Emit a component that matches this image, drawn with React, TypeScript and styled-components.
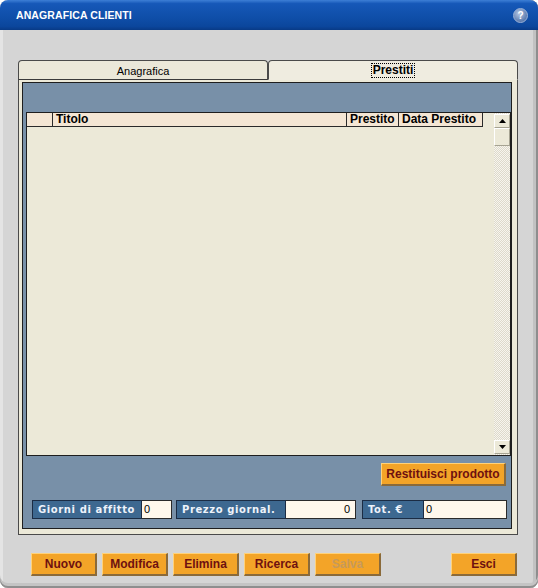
import React from 'react'
import styled, { createGlobalStyle } from 'styled-components'

const GlobalStyle = createGlobalStyle`
    html, body {
        margin: 0;
        padding: 0;
        background: #ffffff;
    }
    body {
        font-family: "Liberation Sans", Arial, sans-serif;
    }
`;

const Window = styled.div`
    width: 538px;
    height: 588px;
    box-sizing: border-box;
    display: flex;
    flex-direction: column;
    background: #d5d5d5;
    border-radius: 8px 8px 8px 8px;
    overflow: hidden;
    box-shadow: inset 0 -2px 0 #8e8e8e, inset 0 -5px 0 #c4c4c4, inset -2px 0 0 #8e8e8e, inset -5px 0 0 #c2c2c2, inset 3px 0 0 #e4e4e4;
`;

const TitleBar = styled.div`
    height: 30px;
    flex: none;
    display: flex;
    align-items: center;
    justify-content: space-between;
    padding: 0 10px 0 16px;
    background: linear-gradient(#3d7fd6 0%, #1658b8 12%, #0f4ea8 60%, #0b469c 88%, #083a86 100%);
`;

const TitleText = styled.span`
    color: #ffffff;
    font-weight: 700;
    font-size: 10.5px;
    letter-spacing: 0.1px;
`;

const HelpIcon = styled.span`
    width: 13px;
    height: 13px;
    border-radius: 50%;
    display: flex;
    align-items: center;
    justify-content: center;
    background: radial-gradient(circle at 40% 35%, #b6c8e4, #5676aa 75%);
    border: 1px solid #9db3d8;
    color: #ffffff;
    font-size: 10px;
    font-weight: 700;
`;

const Body = styled.div`
    flex: 1;
    display: flex;
    flex-direction: column;
    padding: 30px 20px 0 18px;
`;

const TabStrip = styled.div`
    display: flex;
    height: 20px;
`;

type TabProps = {
    $active?: boolean;
}
const Tab = styled.div<TabProps>`
    flex: 1;
    box-sizing: border-box;
    display: flex;
    align-items: center;
    justify-content: center;
    background: ${props => props.$active ? '#efece0' : '#ebe8d9'};
    border: 1px solid #4a4a4a;
    border-bottom: ${props => props.$active ? '1px solid #efece0' : '1px solid #3a3a3a'};
    border-radius: 4px 4px 0 0;
    color: #000000;
    font-size: ${props => props.$active ? '12px' : '11px'};
    font-weight: ${props => props.$active ? 700 : 400};
    padding-top: 1px;
`;

const FocusLabel = styled.span`
    outline: 1px dotted #000;
    padding: 0 1px;
    line-height: 13px;
`;

const TabPage = styled.div`
    box-sizing: border-box;
    height: 455px;
    display: flex;
    flex-direction: column;
    background: #ece9d8;
    border: 1px solid #4a4a4a;
    border-top: none;
    padding: 2px 5px 5px 3px;
`;

const BluePanel = styled.div`
    flex: 1;
    display: flex;
    flex-direction: column;
    background: #7890a8;
    border: 1px solid #1e1e1e;
    padding: 29px 0 9px 3px;
`;

const Grid = styled.div`
    height: 344px;
    box-sizing: border-box;
    display: flex;
    background: #ece9d8;
    border: 1px solid #1e1e1e;
`;

const GridMain = styled.div`
    flex: 1;
`;

const HeaderRow = styled.div`
    display: flex;
    height: 14px;
`;

type HeaderCellProps = {
    $width: number;
}
const HeaderCell = styled.div<HeaderCellProps>`
    width: ${props => props.$width}px;
    box-sizing: border-box;
    background: #f4e6d4;
    border-right: 1px solid #2a2a2a;
    border-bottom: 1px solid #2a2a2a;
    font-size: 12px;
    font-weight: 700;
    line-height: 13px;
    padding-left: 3px;
    white-space: nowrap;
    overflow: hidden;
`;

const ScrollBar = styled.div`
    width: 16px;
    display: flex;
    flex-direction: column;
    background: repeating-conic-gradient(#f7f5ee 0 25%, #ddd9cb 0 50%) 0 0 / 2px 2px;
    padding: 1px 0;
`;

const ScrollButton = styled.div`
    height: 14px;
    box-sizing: border-box;
    display: flex;
    align-items: center;
    justify-content: center;
    background: #ece9d8;
    border-top: 1px solid #ffffff;
    border-left: 1px solid #ffffff;
    border-right: 1px solid #a6a392;
    border-bottom: 1px solid #a6a392;
`;

const ScrollThumb = styled.div`
    height: 18px;
    box-sizing: border-box;
    background: #ece9d8;
    border-top: 1px solid #ffffff;
    border-left: 1px solid #ffffff;
    border-right: 1px solid #a6a392;
    border-bottom: 1px solid #a6a392;
`;

const ScrollTrack = styled.div`
    flex: 1;
`;

const ActionRow = styled.div`
    display: flex;
    justify-content: flex-end;
    margin-top: 7px;
    padding-right: 5px;
`;

type ButtonProps = {
    $width?: number;
    $disabled?: boolean;
}
const OrangeButton = styled.button<ButtonProps>`
    width: ${props => props.$width || 66}px;
    height: 23px;
    box-sizing: border-box;
    padding: 0;
    background: #f3a428;
    border-top: 1px solid #ffd27a;
    border-left: 1px solid #ffd27a;
    border-right: 2px solid #8a6a3a;
    border-bottom: 2px solid #8a6a3a;
    color: ${props => props.$disabled ? '#c79a5a' : '#6e1010'};
    font-family: "Liberation Sans", Arial, sans-serif;
    font-size: 12px;
    font-weight: 700;
    cursor: default;
`;

const FieldRow = styled.div`
    display: flex;
    margin-top: 14px;
    padding-left: 6px;
    height: 19px;
`;

type FieldLabelProps = {
    $width: number;
    $gap?: number;
}
const FieldLabel = styled.div<FieldLabelProps>`
    width: ${props => props.$width}px;
    margin-left: ${props => props.$gap || 0}px;
    box-sizing: border-box;
    background: #3d6890;
    border: 1px solid #1b2c44;
    color: #eef3fb;
    font-family: "DejaVu Sans", Verdana, sans-serif;
    font-size: 10px;
    font-weight: 700;
    letter-spacing: 0.6px;
    line-height: 17px;
    padding-left: 5px;
    white-space: nowrap;
`;

type FieldInputProps = {
    $width: number;
    $right?: boolean;
}
const FieldInput = styled.div<FieldInputProps>`
    width: ${props => props.$width}px;
    box-sizing: border-box;
    background: #fff8ec;
    border: 1px solid #2a2a2a;
    border-left: none;
    font-size: 11px;
    line-height: 17px;
    text-align: ${props => props.$right ? 'right' : 'left'};
    padding: 0 ${props => props.$right ? '5px' : '0'} 0 2px;
`;

const ButtonBar = styled.div`
    display: flex;
    gap: 5px;
    margin-top: 18px;
    padding-left: 13px;
    padding-right: 1px;
`;

const Spacer = styled.div`
    flex: 1;
`;

function Arrow({ down }: { down?: boolean }) {
    return (
        <svg width="7" height="4" viewBox="0 0 7 4">
            {down
                ? <polygon points="0,0 7,0 3.5,4" fill="#000" />
                : <polygon points="0,4 7,4 3.5,0" fill="#000" />}
        </svg>
    )
}

function App() {
    return (
        <>
            <GlobalStyle />
            <Window>
                <TitleBar>
                    <TitleText>ANAGRAFICA CLIENTI</TitleText>
                    <HelpIcon>?</HelpIcon>
                </TitleBar>
                <Body>
                    <TabStrip>
                        <Tab>Anagrafica</Tab>
                        <Tab $active><FocusLabel>Prestiti</FocusLabel></Tab>
                    </TabStrip>
                    <TabPage>
                        <BluePanel>
                            <Grid>
                                <GridMain>
                                    <HeaderRow>
                                        <HeaderCell $width={26}></HeaderCell>
                                        <HeaderCell $width={294}>Titolo</HeaderCell>
                                        <HeaderCell $width={52}>Prestito</HeaderCell>
                                        <HeaderCell $width={84}>Data Prestito</HeaderCell>
                                    </HeaderRow>
                                </GridMain>
                                <ScrollBar>
                                    <ScrollButton><Arrow /></ScrollButton>
                                    <ScrollThumb />
                                    <ScrollTrack />
                                    <ScrollButton><Arrow down /></ScrollButton>
                                </ScrollBar>
                            </Grid>
                            <ActionRow>
                                <OrangeButton $width={125}>Restituisci prodotto</OrangeButton>
                            </ActionRow>
                            <FieldRow>
                                <FieldLabel $width={110}>Giorni di affitto</FieldLabel>
                                <FieldInput $width={30}>0</FieldInput>
                                <FieldLabel $width={110} $gap={4}>Prezzo giornal.</FieldLabel>
                                <FieldInput $width={70} $right>0</FieldInput>
                                <FieldLabel $width={62} $gap={6}>Tot. €</FieldLabel>
                                <FieldInput $width={83}>0</FieldInput>
                            </FieldRow>
                        </BluePanel>
                    </TabPage>
                    <ButtonBar>
                        <OrangeButton>Nuovo</OrangeButton>
                        <OrangeButton>Modifica</OrangeButton>
                        <OrangeButton>Elimina</OrangeButton>
                        <OrangeButton>Ricerca</OrangeButton>
                        <OrangeButton $disabled>Salva</OrangeButton>
                        <Spacer />
                        <OrangeButton>Esci</OrangeButton>
                    </ButtonBar>
                </Body>
            </Window>
        </>
    )
}

export default App
